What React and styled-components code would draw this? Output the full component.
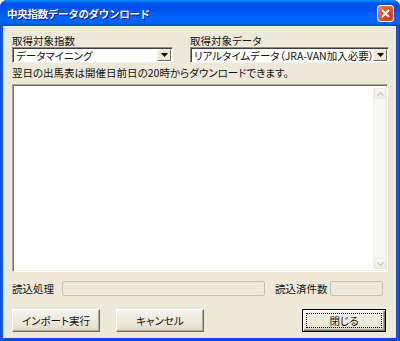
import styled, { createGlobalStyle } from 'styled-components';

const GlobalStyle = createGlobalStyle`
  html, body {
    margin: 0;
    padding: 0;
    background: #ffffff;
  }
  body {
    font-family: "Noto Sans CJK JP", "DejaVu Sans", sans-serif;
    font-size: 10.5px;
    color: #111;
  }
`;

const Window = styled.div`
  width: 400px;
  height: 341px;
  display: flex;
  flex-direction: column;
  box-sizing: border-box;
  background: linear-gradient(to right, #0b3fd6 0, #166aee 2px, #0a46d8 3px, #0a46d8 396px, #1a5ef0 398px, #0831c4 400px);
  border-radius: 7px 7px 0 0;
`;

const TitleBar = styled.div`
  height: 26px;
  flex: none;
  display: flex;
  align-items: center;
  justify-content: space-between;
  padding: 0 6px 0 7px;
  border-radius: 7px 7px 0 0;
  background: linear-gradient(
    to bottom,
    #0997ff 0%,
    #0053ee 12%,
    #0050ee 30%,
    #0066ff 70%,
    #0063f8 88%,
    #0049d6 100%
  );
`;

const Title = styled.span`
  color: #fff;
  font-weight: bold;
  font-size: 10.5px;
  letter-spacing: -0.3px;
  text-shadow: 1px 1px 0 #0a1a8f;
`;

const CloseButton = styled.div`
  width: 17px;
  height: 17px;
  box-sizing: border-box;
  border: 1px solid #fff;
  border-radius: 3px;
  background: radial-gradient(circle at 70% 70%, #c4330e 0%, #e2562a 50%, #f08a63 100%);
  display: flex;
  align-items: center;
  justify-content: center;
`;

const Body = styled.div`
  flex: 1;
  margin: 0 4px 3px 3px;
  background: #ece9d8;
  padding: 8px 8px 6px 9px;
  display: flex;
  flex-direction: column;
`;

const TopGrid = styled.div`
  display: grid;
  grid-template-columns: 161px 199px;
  column-gap: 17px;
`;

const Field = styled.div`
  display: flex;
  flex-direction: column;
`;

const Label = styled.div`
  height: 13px;
  line-height: 13px;
  white-space: nowrap;
  font-feature-settings: "palt";
`;

const Select = styled.div`
  height: 16px;
  box-sizing: border-box;
  display: flex;
  align-items: center;
  background: #fff;
  border-top: 1px solid #8d8b80;
  border-left: 1px solid #8d8b80;
  border-right: 1px solid #f4f3ee;
  border-bottom: 1px solid #f4f3ee;
  box-shadow: inset 1px 1px 0 #3f3e38;
  padding-left: 3px;
  overflow: hidden;
`;

const SelectText = styled.span`
  flex: 1;
  white-space: nowrap;
  overflow: hidden;
  font-feature-settings: "palt";
  line-height: 13px;
`;

const DropButton = styled.div`
  width: 14px;
  height: 12px;
  flex: none;
  margin-right: 1px;
  box-sizing: border-box;
  background: #ece9d8;
  border-top: 1px solid #f4f3ee;
  border-left: 1px solid #f4f3ee;
  border-right: 1px solid #716f64;
  border-bottom: 1px solid #716f64;
  display: flex;
  align-items: center;
  justify-content: center;
`;

const Note = styled.div`
  margin-top: 3px;
  height: 13px;
  line-height: 13px;
  white-space: nowrap;
  font-feature-settings: "palt";
`;

const TextArea = styled.div`
  margin-top: 5px;
  height: 188px;
  box-sizing: border-box;
  background: #fff;
  border-top: 1px solid #aca899;
  border-left: 1px solid #aca899;
  border-right: 1px solid #fff;
  border-bottom: 1px solid #fff;
  box-shadow: inset 1px 1px 0 #716f64, inset -1px -1px 0 #f1efe2;
  display: flex;
  justify-content: flex-end;
  padding: 3px 1px 2px 0;
`;

const ScrollBar = styled.div`
  width: 12px;
  display: flex;
  flex-direction: column;
  justify-content: space-between;
  background: #f7f6f1;
  border-left: 1px solid #f1efe6;
`;

const ScrollButton = styled.div`
  height: 11px;
  box-sizing: border-box;
  border: 1px solid #e9e7de;
  border-radius: 2px;
  background: linear-gradient(to bottom, #fbfaf6, #edebe2);
  display: flex;
  align-items: center;
  justify-content: center;
`;

const StatusRow = styled.div`
  margin-top: 9px;
  height: 15px;
  display: flex;
  align-items: center;
`;

const StatusLabel = styled.span`
  white-space: nowrap;
  margin-right: ${p => p.$gap}px;
  line-height: 13px;
`;

const Meter = styled.div`
  width: ${p => p.$w}px;
  height: 15px;
  flex: none;
  box-sizing: border-box;
  border: 1px solid #c5c2b2;
  border-radius: 2px;
  background: #ece9d8;
  margin-right: ${p => p.$after || 0}px;
`;

const ButtonRow = styled.div`
  margin-top: 13px;
  display: flex;
  align-items: center;
`;

const Button = styled.div`
  width: ${p => p.$w}px;
  height: 23px;
  flex: none;
  box-sizing: border-box;
  display: flex;
  align-items: center;
  justify-content: center;
  margin-left: ${p => p.$ml || 0}px;
  background: linear-gradient(to bottom, #f4f3ee, #ece9d8 60%, #dedbcb);
  border-top: 1px solid #fff;
  border-left: 1px solid #fff;
  border-right: 1px solid #716f64;
  border-bottom: 1px solid #716f64;
  box-shadow: inset -1px -1px 0 #aca899;
  white-space: nowrap;
  font-feature-settings: "palt";
  ${p => p.$default && `
    border: 1px solid #000;
    padding: 3px;
    align-items: stretch;
    box-shadow: inset 1px 1px 0 #fff, inset -1px -1px 0 #716f64, inset -2px -2px 0 #aca899;
  `}
`;

const Focus = styled.span`
  flex: 1;
  display: flex;
  align-items: center;
  justify-content: center;
  outline: 1px dotted #000;
  outline-offset: -1px;
`;

const Triangle = () => (
  <svg width="7" height="4" viewBox="0 0 7 4">
    <path d="M0 0 H7 L3.5 4 Z" fill="#000" />
  </svg>
);

const Chevron = ({ up }) => (
  <svg width="7" height="4" viewBox="0 0 7 4">
    <path
      d={up ? 'M0.5 3.5 L3.5 0.5 L6.5 3.5' : 'M0.5 0.5 L3.5 3.5 L6.5 0.5'}
      fill="none"
      stroke="#c9c7ba"
      strokeWidth="1.2"
    />
  </svg>
);

export default function App() {
  return (
    <>
      <GlobalStyle />
      <Window>
        <TitleBar>
          <Title>中央指数データのダウンロード</Title>
          <CloseButton>
            <svg width="9" height="9" viewBox="0 0 9 9">
              <path d="M1 1 L8 8 M8 1 L1 8" stroke="#fff" strokeWidth="1.8" />
            </svg>
          </CloseButton>
        </TitleBar>
        <Body>
          <TopGrid>
            <Field>
              <Label>取得対象指数</Label>
              <Select>
                <SelectText>データマイニング</SelectText>
                <DropButton><Triangle /></DropButton>
              </Select>
            </Field>
            <Field>
              <Label>取得対象データ</Label>
              <Select>
                <SelectText>リアルタイムデータ（JRA-VAN加入必要）</SelectText>
                <DropButton><Triangle /></DropButton>
              </Select>
            </Field>
          </TopGrid>
          <Note>翌日の出馬表は開催日前日の20時からダウンロードできます。</Note>
          <TextArea>
            <ScrollBar>
              <ScrollButton><Chevron up /></ScrollButton>
              <ScrollButton><Chevron /></ScrollButton>
            </ScrollBar>
          </TextArea>
          <StatusRow>
            <StatusLabel $gap={8}>読込処理</StatusLabel>
            <Meter $w={203} $after={10} />
            <StatusLabel $gap={2}>読込済件数</StatusLabel>
            <Meter $w={53} />
          </StatusRow>
          <ButtonRow>
            <Button $w={88}>インポート実行</Button>
            <Button $w={88} $ml={16}>キャンセル</Button>
            <Button $w={84} $ml={98} $default><Focus>閉じる</Focus></Button>
          </ButtonRow>
        </Body>
      </Window>
    </>
  );
}
